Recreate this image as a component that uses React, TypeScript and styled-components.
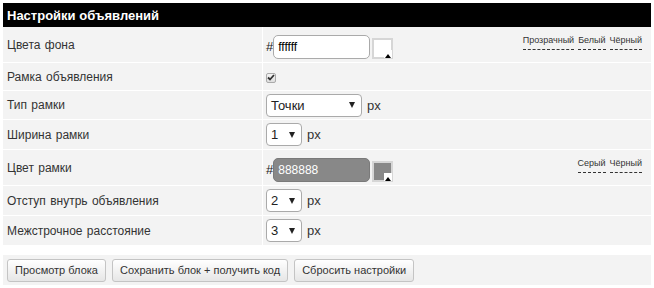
import styled, { createGlobalStyle } from "styled-components";

const GlobalStyle = createGlobalStyle`
  body {
    margin: 0;
    background: #fff;
    font-family: "Liberation Sans", Arial, sans-serif;
    color: #222;
  }
`;

const Page = styled.div`
  padding: 3px;
`;

const Panel = styled.div`
  width: 648px;
`;

const Header = styled.div`
  height: 24px;
  background: #000;
  color: #fff;
  font-size: 13px;
  font-weight: bold;
  display: flex;
  align-items: center;
  padding-left: 4px;
`;

const Grid = styled.div`
  display: grid;
  grid-template-columns: 259px 1fr;
  gap: 1px;
  background: #fff;
`;

const LabelCell = styled.div<{ $h: number }>`
  height: ${(p) => p.$h}px;
  background: #f3f3f3;
  display: flex;
  align-items: center;
  padding-left: 4px;
  font-size: 12px;
  word-spacing: 1px;
  color: #333;
`;

const ValueCell = styled.div<{ $h: number; $top?: boolean }>`
  height: ${(p) => p.$h}px;
  box-sizing: border-box;
  background: #f3f3f3;
  display: flex;
  align-items: ${(p) => (p.$top ? "flex-end" : "center")};
  padding: ${(p) => (p.$top ? "0 9px 3px 3px" : "0 9px 0 3px")};
  font-size: 13px;
  color: #333;
`;

const Hash = styled.span`
  font-size: 13px;
  color: #222;
  margin-bottom: 5px;
`;

const ColorInput = styled.div<{ $bg: string; $fg: string; $border: string }>`
  width: 97px;
  height: 24px;
  box-sizing: border-box;
  border: 1px solid ${(p) => p.$border};
  border-radius: 5px;
  background: ${(p) => p.$bg};
  color: ${(p) => p.$fg};
  font-size: 12px;
  display: flex;
  align-items: center;
  padding-left: 4px;
`;

const Swatch = styled.div<{ $fill: string }>`
  position: relative;
  width: 21px;
  height: 21px;
  box-sizing: border-box;
  border: 2px solid #d6d6d6;
  background: ${(p) => p.$fill};
  margin-left: 2px;
`;

const SwatchCorner = styled.span`
  position: absolute;
  right: -1px;
  bottom: -1px;
  width: 8px;
  height: 8px;
  background: #fff;
  display: flex;
  align-items: flex-end;
  justify-content: center;
`;

const Links = styled.div`
  align-self: flex-start;
  margin-left: auto;
  margin-top: 8px;
  display: flex;
  gap: 4px;
  font-size: 9px;
  color: #333;
`;

const Link = styled.span`
  border-bottom: 1px dashed #333;
  padding-bottom: 3px;
  line-height: 11px;
`;

const CheckBox = styled.span`
  width: 10px;
  height: 10px;
  box-sizing: border-box;
  border: 1px solid #aaa;
  border-radius: 2px;
  background: linear-gradient(#f4f4f4, #dedede);
  display: flex;
  align-items: center;
  justify-content: center;
  margin-top: 2px;
`;

const Select = styled.div<{ $w: number }>`
  width: ${(p) => p.$w}px;
  height: 23px;
  box-sizing: border-box;
  border: 1px solid #aaa;
  border-radius: 4px;
  background: #fff;
  display: flex;
  align-items: center;
  justify-content: space-between;
  padding: 0 6px 0 4px;
  font-size: 13px;
  color: #222;
`;

const Arrow = styled.span`
  width: 0;
  height: 0;
  border-left: 3px solid transparent;
  border-right: 3px solid transparent;
  border-top: 6px solid #222;
`;

const Unit = styled.span`
  margin-left: 5px;
  font-size: 13px;
  color: #333;
`;

const Bar = styled.div`
  margin-top: 10px;
  height: 30px;
  background: #f3f3f3;
  display: flex;
  align-items: center;
  gap: 6px;
  padding-left: 4px;
`;

const Button = styled.button`
  height: 23px;
  padding: 0 7px;
  border: 1px solid #c4c4c4;
  border-radius: 3px;
  background: linear-gradient(#ffffff, #e6e6e6);
  font-family: "Liberation Sans", Arial, sans-serif;
  font-size: 11px;
  color: #333;
`;

function Corner() {
  return (
    <SwatchCorner>
      <svg width="6" height="4" viewBox="0 0 6 4">
        <path d="M0 4 L3 0 L6 4 Z" fill="#000" />
      </svg>
    </SwatchCorner>
  );
}

function ColorField({ value, bg, fg, border, fill }: { value: string; bg: string; fg: string; border: string; fill: string }) {
  return (
    <>
      <Hash>#</Hash>
      <ColorInput $bg={bg} $fg={fg} $border={border}>{value}</ColorInput>
      <Swatch $fill={fill}>
        <Corner />
      </Swatch>
    </>
  );
}

function Dropdown({ value, w }: { value: string; w: number }) {
  return (
    <>
      <Select $w={w}>
        <span>{value}</span>
        <Arrow />
      </Select>
      <Unit>px</Unit>
    </>
  );
}

export default function App() {
  return (
    <Page>
      <GlobalStyle />
      <Panel>
        <Header>Настройки объявлений</Header>
        <Grid>
          <LabelCell $h={35}>Цвета фона</LabelCell>
          <ValueCell $h={35} $top>
            <ColorField value="ffffff" bg="#fff" fg="#000" border="#aaa" fill="#fff" />
            <Links>
              <Link>Прозрачный</Link>
              <Link>Белый</Link>
              <Link>Чёрный</Link>
            </Links>
          </ValueCell>

          <LabelCell $h={27}>Рамка объявления</LabelCell>
          <ValueCell $h={27}>
            <CheckBox>
              <svg width="8" height="7" viewBox="0 0 8 7">
                <path d="M1 3.5 L3 5.5 L7 1" stroke="#333" strokeWidth="1.8" fill="none" />
              </svg>
            </CheckBox>
          </ValueCell>

          <LabelCell $h={28}>Тип рамки</LabelCell>
          <ValueCell $h={28}>
            <Dropdown value="Точки" w={96} />
          </ValueCell>

          <LabelCell $h={29}>Ширина рамки</LabelCell>
          <ValueCell $h={29}>
            <Dropdown value="1" w={36} />
          </ValueCell>

          <LabelCell $h={35}>Цвет рамки</LabelCell>
          <ValueCell $h={35} $top>
            <ColorField value="888888" bg="#888" fg="#fff" border="#7a7a7a" fill="#888" />
            <Links>
              <Link>Серый</Link>
              <Link>Чёрный</Link>
            </Links>
          </ValueCell>

          <LabelCell $h={29}>Отступ внутрь объявления</LabelCell>
          <ValueCell $h={29}>
            <Dropdown value="2" w={36} />
          </ValueCell>

          <LabelCell $h={29}>Межстрочное расстояние</LabelCell>
          <ValueCell $h={29}>
            <Dropdown value="3" w={36} />
          </ValueCell>
        </Grid>
        <Bar>
          <Button>Просмотр блока</Button>
          <Button>Сохранить блок + получить код</Button>
          <Button>Сбросить настройки</Button>
        </Bar>
      </Panel>
    </Page>
  );
}
